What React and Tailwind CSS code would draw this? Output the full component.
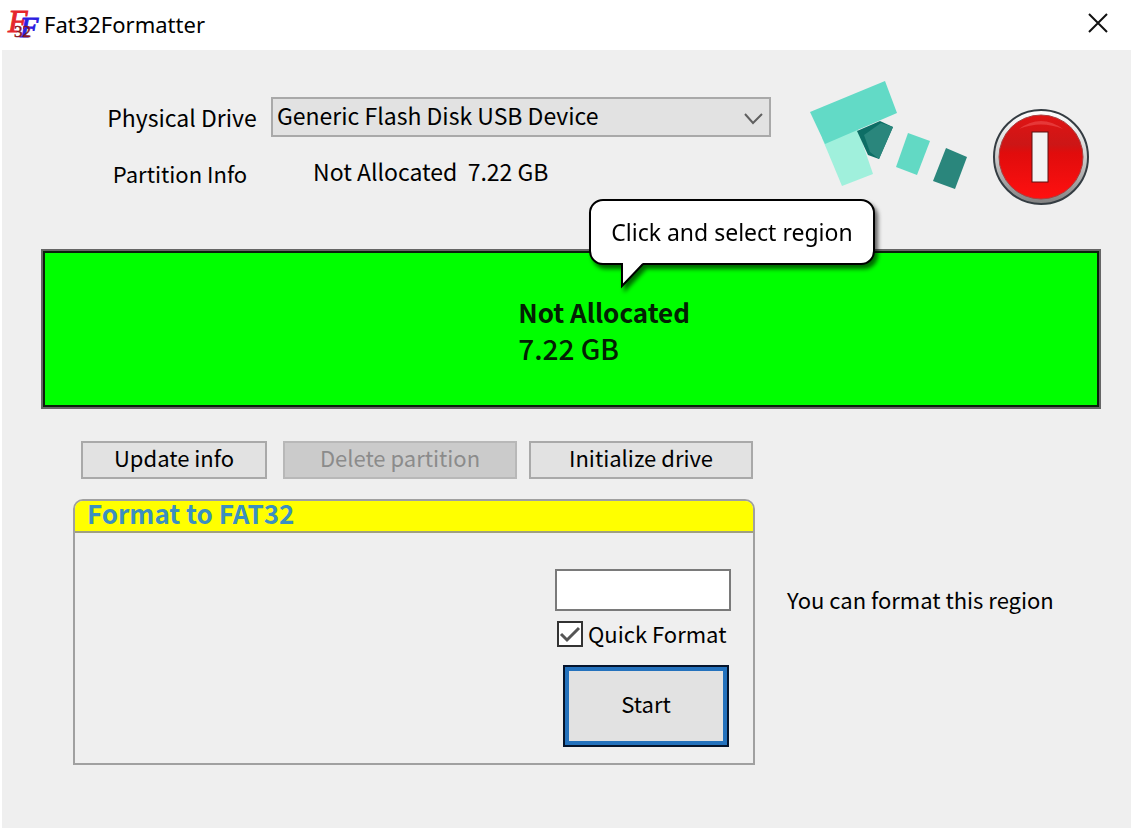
import React, { useState } from 'react';

const AppIcon = () => (
  <svg className="overflow-visible" width="34" height="34" viewBox="0 0 34 34" aria-hidden="true" fontFamily="Liberation Serif, serif" fontStyle="italic">
    <text x="1" y="24" fontSize="32" fill="#e5262c" stroke="#e5262c">F</text>
    <text x="13" y="29" fontSize="30" fill="#2c20e0" stroke="#2c20e0">F</text>
    <text x="7" y="29" fontSize="17" fontStyle="normal" fill="#8c1420" stroke="#8c1420" strokeWidth="0.5">32</text>
  </svg>
);

const Shapes = () => (
  <svg width="160" height="110" viewBox="0 0 160 110" aria-hidden="true">
    <path d="M12 58L46 44L63 94L32 106Z" fill="#a0f0dc" />
    <path d="M0 32L75 1L87 33L15 64Z" fill="#62dac6" />
    <path d="M47 51L70 41L83 47L69 79L58 75Z" fill="#0d6e65" />
    <path d="M54 55L71 43L83 47L69 79L60 72Z" fill="#2a867c" />
    <path d="M98 53L120 61L107 95L86 87Z" fill="#62d9c4" />
    <path d="M136 68L157 77L145 109L123 101Z" fill="#2a867c" />
  </svg>
);

const PowerIcon = () => (
  <svg width="100" height="100" viewBox="0 0 100 100" aria-hidden="true">
    <defs>
      <linearGradient id="ring" x1="0" y1="0" x2="0" y2="1">
        <stop offset="0" stopColor="#ffffff" />
        <stop offset="0.45" stopColor="#d4d4d4" />
        <stop offset="1" stopColor="#808080" />
      </linearGradient>
      <linearGradient id="red" x1="0" y1="0" x2="0" y2="1">
        <stop offset="0" stopColor="#e01414" />
        <stop offset="0.35" stopColor="#cc1616" />
        <stop offset="0.45" stopColor="#e00c0c" />
        <stop offset="1" stopColor="#ff1010" />
      </linearGradient>
    </defs>
    <circle cx="50" cy="50" r="47" fill="url(#ring)" stroke="#343c42" strokeWidth="2" />
    <circle cx="50" cy="50" r="42" fill="url(#red)" stroke="#a84040" strokeWidth="1" />
    <path d="M28 22Q50 6 72 22Q50 13 28 22Z" fill="#ee5050" opacity="0.6" />
    <rect x="41" y="25" width="16" height="50" fill="#f3f3f3" stroke="#5c1010" strokeWidth="1" />
  </svg>
);

const Bubble = ({ children }) => (
  <div className="absolute left-[51.7%] -top-[52px] drop-shadow-[3px_4px_2px_rgba(0,0,0,0.6)]">
    <div className="flex h-[66px] w-[286px] items-center justify-center rounded-[14px] border-2 border-black bg-white font-['Noto_Sans',sans-serif] text-[23px]">
      {children}
    </div>
    <svg className="absolute top-[63px] left-[31px]" width="24" height="28" viewBox="0 0 24 28" aria-hidden="true">
      <path d="M2 0V24L23 1V0Z" fill="#fff" />
      <path d="M2 1V24L23 2" fill="none" stroke="#000" strokeWidth="2" />
    </svg>
  </div>
);

const Button = ({ className, ...props }) => (
  <button
    className={`h-[38px] border-2 border-[#a9a9a9] bg-[#e2e2e2] pb-1.5 leading-none disabled:border-[#b8b8b8] disabled:bg-[#cbcbcb] disabled:text-[#8b8b8b] ${className}`}
    {...props}
  />
);

const App = () => {
  const [label, setLabel] = useState('');
  const [quick, setQuick] = useState(true);

  return (
    <div className="min-h-[828px] border-x-2 border-white bg-[#efefef] font-['Noto_Sans_CJK_JP',sans-serif] text-[22px] leading-8 text-black">
      <header className="flex h-[50px] items-center bg-white pr-[22px] pl-[5px]">
        <AppIcon />
        <h1 className="flex-1 pb-0.5 pl-[3px] font-['Noto_Sans',sans-serif] text-[22px]">Fat32Formatter</h1>
        <button aria-label="Close" className="pb-1">
          <svg width="22" height="22" viewBox="0 0 22 22" fill="none" stroke="#111" strokeWidth="2">
            <path d="M2 2L20 20M20 2L2 20" />
          </svg>
        </button>
      </header>

      <main className="pr-[30px] pl-[39px]">
        <section className="flex h-[199px] pt-[30px]">
          <div className="grid flex-1 auto-rows-min grid-cols-[182px_1fr] gap-y-4 pt-[17px] pl-12">
            <label htmlFor="drive" className="pt-1 pl-1 text-center text-[23px]">Physical Drive</label>
            <div className="relative">
              <select
                id="drive"
                className="h-10 w-full appearance-none border-2 border-[#a9a9a9] bg-[#e2e2e2] pb-1 pl-1 text-[23px] leading-8"
              >
                <option>Generic Flash Disk USB Device</option>
              </select>
              <svg className="pointer-events-none absolute top-4 right-2" width="19" height="12" viewBox="0 0 19 12" fill="none" stroke="#606060" strokeWidth="2">
                <path d="M1 1L9 10L18 1" />
              </svg>
            </div>
            <span className="pt-1 text-center">Partition Info</span>
            <span className="pt-0.5 pl-[42px] text-[23px] whitespace-pre">Not Allocated  7.22 GB</span>
          </div>
          <div className="pl-[39px]">
            <Shapes />
          </div>
          <button aria-label="Exit" className="mt-[27px] mr-[10px] ml-[21px] size-[100px]">
            <PowerIcon />
          </button>
        </section>

        <section className="relative flex h-[160px] justify-center border-2 border-[#666] bg-[#00ff00] outline-2 -outline-offset-4 outline-[#0a200a]">
          <button className="w-full pt-0.5 pl-[45%] text-left text-[#032003]">
            <strong className="block text-[26px] leading-9 font-bold">Not Allocated</strong>
            <span className="block text-[28px] leading-9 font-medium">7.22 GB</span>
          </button>
          <Bubble>Click and select region</Bubble>
        </section>

        <div className="flex pt-8 pl-10">
          <Button className="mr-4 w-[186px]">Update info</Button>
          <Button className="mr-3 w-[234px]" disabled>Delete partition</Button>
          <Button className="w-[224px]">Initialize drive</Button>
        </div>

        <div className="flex items-center pt-5 pl-8">
          <section className="h-[266px] flex-1 rounded-t-[10px] border-2 border-[#a0a0a0]">
            <h2 className="h-8 rounded-t-[8px] border-b-2 border-[#a0a080] bg-[#ffff00] pl-3 text-[26px] leading-6 font-bold text-[#3b8fc0]">
              Format to FAT32
            </h2>
            <form className="flex flex-col items-end pt-9 pr-[22px]" onSubmit={(e) => e.preventDefault()}>
              <input
                type="text"
                aria-label="Volume label"
                value={label}
                onChange={(e) => setLabel(e.target.value)}
                className="h-[42px] w-[176px] border-2 border-[#7a7a7a] bg-white px-2"
              />
              <label className="mt-[7px] flex w-[174px] items-center gap-[5px]">
                <span className="relative flex">
                  <input
                    type="checkbox"
                    checked={quick}
                    onChange={(e) => setQuick(e.target.checked)}
                    className="size-[26px] appearance-none border-2 border-[#333] bg-white"
                  />
                  {quick && (
                    <svg className="pointer-events-none absolute inset-0" width="26" height="26" viewBox="0 0 26 26" fill="none" stroke="#555" strokeWidth="3">
                      <path d="M4 13L10 19L22 7" />
                    </svg>
                  )}
                </span>
                <span className="pb-0.5 leading-[30px] whitespace-nowrap">Quick Format</span>
              </label>
              <button className="mt-[15px] mr-0.5 h-[82px] w-[166px] border-2 border-[#04142c] bg-[#e2e2e2] pb-1.5 ring-4 ring-[#2472bd] ring-inset">
                Start
              </button>
            </form>
          </section>
          <p className="w-[346px] pb-[66px] pl-8">You can format this region</p>
        </div>
      </main>
    </div>
  );
};

export default App;
